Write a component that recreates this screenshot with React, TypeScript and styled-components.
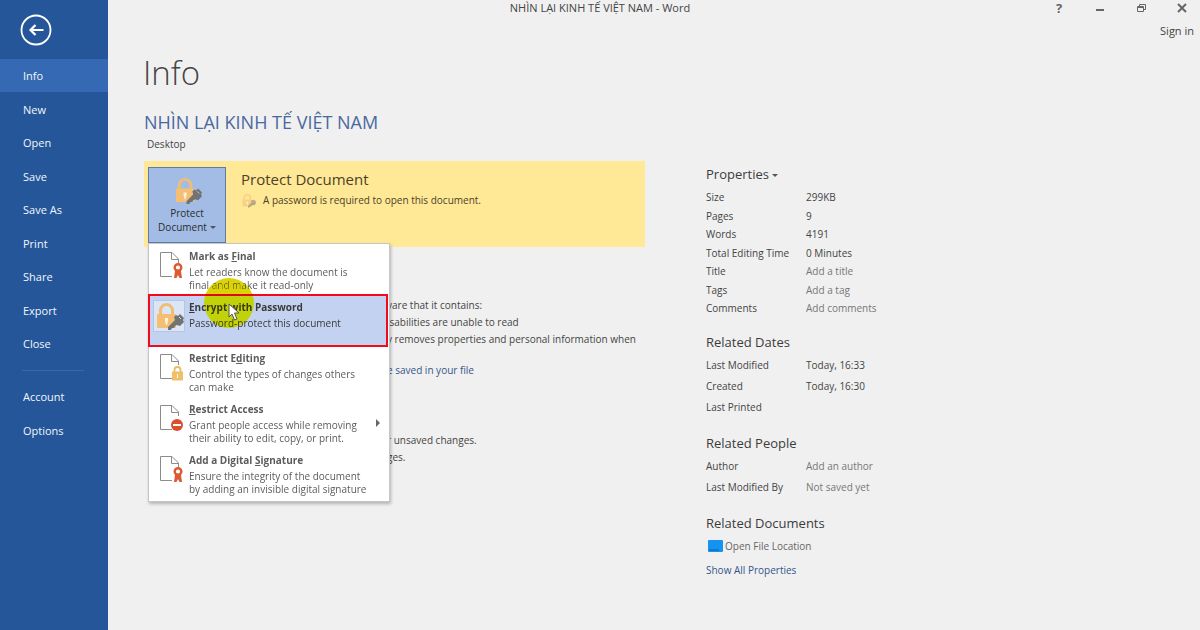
import React from "react";
import styled, { createGlobalStyle, css } from "styled-components";

const Global = createGlobalStyle`
  * { box-sizing: border-box; }
  body { margin: 0; background: #f0f0f0; color: #444; font-family: "Open Sans", "Noto Sans", sans-serif; font-size: 10px; line-height: 16px; }
  h1, h2, h3, p, ul, dl, dd, dt { margin: 0; padding: 0; font-weight: 400; }
  button { font: inherit; color: inherit; background: none; border: 0; padding: 0; text-align: left; }
  a { color: inherit; text-decoration: none; }
`;

const Shell = styled.div`
  position: relative;
  display: flex;
  min-height: 100vh;
`;

const Sidebar = styled.aside`
  flex: 0 0 108px;
  background: #245699;
  color: #f3f7fc;
  font-size: 11px;
`;

const BackButton = styled.button`
  display: block;
  height: 32px;
  margin: 14px 0 13px 20px;
`;

const Nav = styled.nav`
  display: flex;
  flex-direction: column;
`;

const NavItem = styled.a<{ $active?: boolean }>`
  padding-left: 23px;
  height: 33px;
  line-height: 34px;
  background: ${(p) => (p.$active ? "#3569b3" : "transparent")};
  &:nth-child(even) { height: 34px; line-height: 35px; }
`;

const Divider = styled.hr`
  width: 62px;
  margin: 10px 0 9px 22px;
  border: 0;
  border-top: 1px solid #3b69a6;
`;

const Main = styled.main`
  flex: 1;
  min-width: 0;
`;

const TitleBar = styled.header`
  position: absolute;
  inset: 0 0 auto 0;
  text-align: center;
  font-size: 11px;
`;

const WindowControls = styled.div`
  position: absolute;
  top: 0;
  right: 12px;
  display: flex;
  gap: 29px;
  button { width: 12px; height: 15px; display: flex; align-items: center; justify-content: center; font-size: 13px; font-weight: 700; color: #666; }
`;

const SignIn = styled.a`
  position: absolute;
  right: 6px;
  top: 23px;
`;

const PageTitle = styled.h1`
  padding: 48px 0 0 35px;
  font-size: 33px;
  line-height: 50px;
  font-weight: 300;
`;

const Columns = styled.div`
  display: grid;
  grid-template-columns: minmax(0, 501px) minmax(0, 1fr);
  column-gap: 61px;
  padding: 10px 6px 0 36px;
`;

const DocName = styled.h2`
  font-size: 18px;
  line-height: 28px;
  color: #4a68a0;
  white-space: nowrap;
`;

const Location = styled.p`
  padding-left: 3px;
  margin-bottom: 9px;
`;

const Banner = styled.section`
  position: relative;
  display: flex;
  gap: 15px;
  height: 86px;
  padding: 6px 4px 4px;
  background: #ffe896;
`;

const ProtectButton = styled.button`
  display: flex;
  flex-direction: column;
  align-items: center;
  flex: 0 0 78px;
  padding-top: 8px;
  border: 1px solid #5f7ba8;
  background: #a2bce6;
  color: #2c2c2c;
  line-height: 14px;
  text-align: center;
  svg { margin-bottom: 1px; }
`;

const Caret = styled.i`
  display: inline-block;
  margin-left: 3px;
  vertical-align: 2px;
  border: solid transparent;
  border-width: 3px 3px 0;
  border-top-color: #555;
`;

const BannerTitle = styled.h3`
  font-size: 15px;
  line-height: 25px;
  color: #4c4228;
`;

const BannerText = styled.p`
  display: flex;
  align-items: center;
  gap: 7px;
  color: #4c4228;
`;

const Menu = styled.div`
  position: absolute;
  z-index: 1;
  left: 4px;
  top: 82px;
  width: 242px;
  padding: 0 2px 2px 0;
  background: #fff;
  border: 1px solid #c6c6c6;
  box-shadow: 1px 2px 3px rgba(0, 0, 0, 0.25);
`;

const MenuItem = styled.button<{ $selected?: boolean }>`
  position: relative;
  display: grid;
  grid-template-columns: 36px 1fr;
  width: 100%;
  height: 51px;
  padding: 4px 0 0 4px;
  color: #5c5c5c;
  line-height: 13px;
  white-space: nowrap;
  strong { display: block; line-height: 16px; font-weight: 700; margin-bottom: 2px; }
  ${(p) =>
    p.$selected &&
    css`
      background: #c2d2f0;
      color: #3a3a3a;
      outline: 2px solid #f00a1c;
      outline-offset: -1px;
      z-index: 4;
    `}
`;

const IconBox = styled.span<{ $framed?: boolean }>`
  display: flex;
  justify-content: flex-end;
  align-items: center;
  width: 32px;
  height: 32px;
  margin-top: 1px;
  ${(p) => p.$framed && css`background: #dbe5f6; border: 1px solid #b4c6e8;`}
`;

const SubArrow = styled.i`
  position: absolute;
  right: 7px;
  top: 22px;
  border: solid transparent;
  border-width: 4px 0 4px 4px;
  border-left-color: #666;
`;

const ClickSpot = styled.span`
  position: absolute;
  z-index: 5;
  left: 55px;
  top: 34px;
  width: 50px;
  height: 50px;
  border-radius: 50%;
  background: #dcd20a;
  mix-blend-mode: darken;
`;

const Pointer = styled.svg`
  position: absolute;
  z-index: 6;
  left: 79px;
  top: 59px;
`;

const Details = styled.section`
  padding: 50px 0 0 243px;
  line-height: 17px;
  white-space: nowrap;
`;

const DetailLink = styled.a`
  display: block;
  margin: 14px 0 53px;
  color: #34558c;
`;

const Panel = styled.section`
  padding-top: 56px;
`;

const Group = styled.section`
  margin-bottom: 15px;
`;

const GroupTitle = styled.h3`
  font-size: 13px;
  line-height: 20px;
  color: #3c3c3c;
  margin-bottom: 3px;
`;

const Facts = styled.dl<{ $roomy?: boolean }>`
  display: grid;
  grid-template-columns: 100px 1fr;
  grid-template-rows: ${(p) => (p.$roomy ? "none" : "repeat(3, 19px 18px)")};
  grid-auto-rows: ${(p) => (p.$roomy ? 21 : 19)}px;
  line-height: ${(p) => (p.$roomy ? 21 : 20)}px;
`;

const Value = styled.dd<{ $hint?: boolean }>`
  color: ${(p) => (p.$hint ? "#777" : "inherit")};
`;

const FileLink = styled.a`
  display: flex;
  align-items: center;
  gap: 2px;
  padding-left: 2px;
  margin: 5px 0 8px;
  color: #666;
`;

const AllLink = styled.a`
  color: #34558c;
`;

const LockKey = ({ size, faded }: { size: number; faded?: boolean }) => (
  <svg width={size} height={size} viewBox="0 0 30 30" opacity={faded ? 0.55 : 1} aria-hidden="true">
    <path d="M6.500 14V9.500a6 6 0 0 1 12 0V14" fill="none" stroke="#f0bd74" strokeWidth="3" />
    <rect x="3" y="13" width="19" height="14" rx="1" fill="#f4bf72" />
    <path d="M11 17h3v3l-1 4h-1l-1-4z" fill="#fff3dc" />
    <path d="M14 29v-3l7-7-1-3 2-2 2 1 2-2 4 4-1 2 1 2-4 4-3-1-2 1-1 2-2 0-1 2z" fill="#737373" />
    <path d="M25 16l2 2" stroke="#d5d9e2" />
  </svg>
);

type Badge = "ribbon" | "lock" | "deny";

const PageIcon = ({ badge }: { badge: Badge }) => (
  <svg width="28" height="30" viewBox="0 0 28 30" aria-hidden="true">
    <path d="M15 26.500H3.500V2.500H15L21.500 9V13" fill="#fff" stroke="#8c8c8c" />
    <path d="M14.500 2.500V9.500H21.500" fill="none" stroke="#8c8c8c" />
    {badge === "ribbon" && (
      <g>
        <circle cx="21" cy="17.500" r="3.300" fill="#fff" stroke="#dd5a32" strokeWidth="2.400" />
        <path d="M18 21h6l1 7h-2.500l-1.500-3-1.500 3H17z" fill="#dd5a32" />
      </g>
    )}
    {badge === "lock" && (
      <g>
        <path d="M17.500 21v-3a3 3 0 0 1 6 0v3" fill="none" stroke="#ecb964" strokeWidth="1.800" />
        <rect x="15" y="19.500" width="11" height="9" fill="#f0bf6a" />
        <path d="M20 22h1v4h-1z" fill="#fff" />
      </g>
    )}
    {badge === "deny" && (
      <g>
        <circle cx="20" cy="22" r="6" fill="#dc4f2e" />
        <path d="M16 21h8v2h-8z" fill="#fff" />
      </g>
    )}
  </svg>
);

const navItems = ["Info", "New", "Open", "Save", "Save As", "Print", "Share", "Export", "Close"];

type Fact = [string, string, boolean?];

const facts: Fact[] = [
  ["Size", "299KB"],
  ["Pages", "9"],
  ["Words", "4191"],
  ["Total Editing Time", "0 Minutes"],
  ["Title", "Add a title", true],
  ["Tags", "Add a tag", true],
  ["Comments", "Add comments", true],
];
const dates: Fact[] = [
  ["Last Modified", "Today, 16:33"],
  ["Created", "Today, 16:30"],
  ["Last Printed", ""],
];
const people: Fact[] = [
  ["Author", "Add an author", true],
  ["Last Modified By", "Not saved yet", true],
];

const FactList = ({ rows, roomy }: { rows: Fact[]; roomy?: boolean }) => (
  <Facts $roomy={roomy}>
    {rows.map(([k, v, hint]) => (
      <React.Fragment key={k}>
        <dt>{k}</dt>
        <Value $hint={hint}>{v}</Value>
      </React.Fragment>
    ))}
  </Facts>
);

export default function App() {
  return (
    <Shell>
      <Global />
      <Sidebar>
        <BackButton aria-label="Back">
          <svg width="32" height="32" viewBox="0 0 32 32" fill="none" stroke="#fff">
            <circle cx="16" cy="16" r="14.500" strokeWidth="1.800" />
            <path d="M23.500 16H11M15.500 11L10.500 16L15.500 21" strokeWidth="2.200" />
          </svg>
        </BackButton>
        <Nav>
          {navItems.map((n, i) => (
            <NavItem href="#" key={n} $active={i === 0}>{n}</NavItem>
          ))}
        </Nav>
        <Divider />
        <Nav>
          <NavItem href="#">Account</NavItem>
          <NavItem href="#">Options</NavItem>
        </Nav>
      </Sidebar>
      <Main>
        <PageTitle>Info</PageTitle>
        <Columns>
          <div>
            <DocName>NHÌN LẠI KINH TẾ VIỆT NAM</DocName>
            <Location>Desktop</Location>
            <Banner>
              <ProtectButton>
                <LockKey size={29} />
                <span>Protect</span>
                <span>Document<Caret /></span>
              </ProtectButton>
              <div>
                <BannerTitle>Protect Document</BannerTitle>
                <BannerText><LockKey size={15} faded />A password is required to open this document.</BannerText>
              </div>
              <Menu>
                <MenuItem>
                  <IconBox><PageIcon badge="ribbon" /></IconBox>
                  <span><strong>Mark as <u>F</u>inal</strong>Let readers know the document is<br />final and make it read-only</span>
                </MenuItem>
                <MenuItem $selected>
                  <IconBox $framed><LockKey size={30} /></IconBox>
                  <span><strong><u>E</u>ncrypt with Password</strong>Password-protect this document</span>
                </MenuItem>
                <MenuItem>
                  <IconBox><PageIcon badge="lock" /></IconBox>
                  <span><strong>Restrict E<u>d</u>iting</strong>Control the types of changes others<br />can make</span>
                </MenuItem>
                <MenuItem>
                  <IconBox><PageIcon badge="deny" /></IconBox>
                  <span><strong><u>R</u>estrict Access</strong>Grant people access while removing<br />their ability to edit, copy, or print.</span>
                  <SubArrow />
                </MenuItem>
                <MenuItem>
                  <IconBox><PageIcon badge="ribbon" /></IconBox>
                  <span><strong>Add a Digital <u>S</u>ignature</strong>Ensure the integrity of the document<br />by adding an invisible digital signature</span>
                </MenuItem>
                <ClickSpot />
                <Pointer width="12" height="18" viewBox="0 0 12 18">
                  <path d="M1 1v13l3-3 2.500 6 2.500-1-2.500-6H11z" fill="#fff" stroke="#555" />
                </Pointer>
              </Menu>
            </Banner>
            <Details>
              <p>vare that it contains:</p>
              <p>isabilities are unable to read</p>
              <p>y removes properties and personal information when</p>
              <DetailLink href="#">e saved in your file</DetailLink>
              <p>r unsaved changes.</p>
              <p>ges.</p>
            </Details>
          </div>
          <Panel>
            <Group>
              <GroupTitle>Properties<Caret /></GroupTitle>
              <FactList rows={facts} />
            </Group>
            <Group>
              <GroupTitle>Related Dates</GroupTitle>
              <FactList rows={dates} roomy />
            </Group>
            <Group>
              <GroupTitle>Related People</GroupTitle>
              <FactList rows={people} roomy />
            </Group>
            <Group>
              <GroupTitle>Related Documents</GroupTitle>
              <FileLink href="#">
                <svg width="15" height="12" viewBox="0 0 15 12" aria-hidden="true">
                  <rect width="15" height="12" rx="1" fill="#1593f0" />
                  <path d="M1 10h10" stroke="#0b62ad" />
                </svg>
                Open File Location
              </FileLink>
              <AllLink href="#">Show All Properties</AllLink>
            </Group>
          </Panel>
        </Columns>
      </Main>
      <TitleBar>
        NHÌN LẠI KINH TẾ VIỆT NAM - Word
        <WindowControls>
          <button aria-label="Help">?</button>
          <button aria-label="Minimize"><svg width="10" height="10" stroke="#666" strokeWidth="2"><path d="M1 7h8" /></svg></button>
          <button aria-label="Restore"><svg width="10" height="10" fill="none" stroke="#666"><path d="M1.500 3.500h6v5h-6zM1.500 4.500h6M3.500 3V1.500h6v5H8" /></svg></button>
          <button aria-label="Close"><svg width="10" height="10" stroke="#666" strokeWidth="2"><path d="M1 1l8 8M9 1l-8 8" /></svg></button>
        </WindowControls>
        <SignIn href="#">Sign in</SignIn>
      </TitleBar>
    </Shell>
  );
}
